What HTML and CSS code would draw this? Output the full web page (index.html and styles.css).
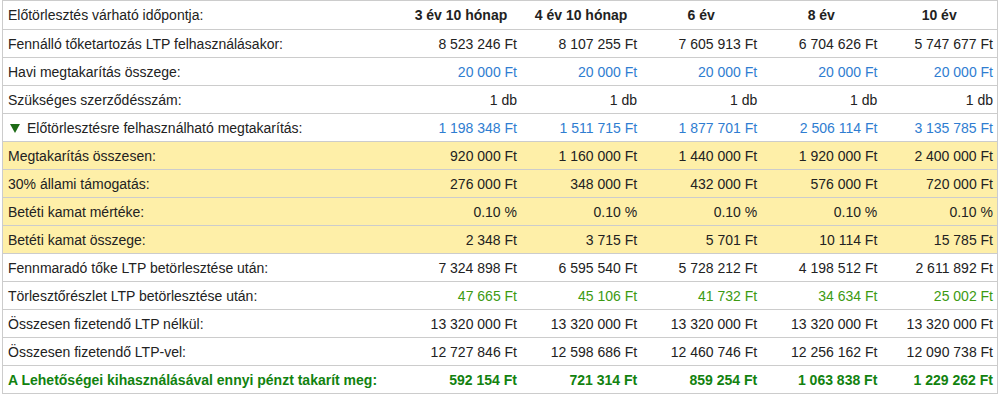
FILE: index.html
```html
<!DOCTYPE html>
<html lang="hu">
<head>
<meta charset="utf-8">
<title>LTP előtörlesztés</title>
<link rel="stylesheet" href="styles.css">
</head>
<body>
<table class="calc">
  <colgroup>
    <col class="c-label">
    <col class="c-val">
    <col class="c-val">
    <col class="c-val">
    <col class="c-val">
    <col class="c-last">
  </colgroup>
  <tr class="head">
    <td class="label">Előtörlesztés várható időpontja:</td>
    <th>3 év 10 hónap</th><th>4 év 10 hónap</th><th>6 év</th><th>8 év</th><th>10 év</th>
  </tr>
  <tr>
    <td class="label">Fennálló tőketartozás LTP felhasználásakor:</td>
    <td>8 523 246 Ft</td><td>8 107 255 Ft</td><td>7 605 913 Ft</td><td>6 704 626 Ft</td><td>5 747 677 Ft</td>
  </tr>
  <tr class="blue">
    <td class="label">Havi megtakarítás összege:</td>
    <td>20 000 Ft</td><td>20 000 Ft</td><td>20 000 Ft</td><td>20 000 Ft</td><td>20 000 Ft</td>
  </tr>
  <tr>
    <td class="label">Szükséges szerződésszám:</td>
    <td>1 db</td><td>1 db</td><td>1 db</td><td>1 db</td><td>1 db</td>
  </tr>
  <tr class="blue">
    <td class="label"><span class="tri"></span>Előtörlesztésre felhasználható megtakarítás:</td>
    <td>1 198 348 Ft</td><td>1 511 715 Ft</td><td>1 877 701 Ft</td><td>2 506 114 Ft</td><td>3 135 785 Ft</td>
  </tr>
  <tr class="yellow">
    <td class="label">Megtakarítás összesen:</td>
    <td>920 000 Ft</td><td>1 160 000 Ft</td><td>1 440 000 Ft</td><td>1 920 000 Ft</td><td>2 400 000 Ft</td>
  </tr>
  <tr class="yellow">
    <td class="label">30% állami támogatás:</td>
    <td>276 000 Ft</td><td>348 000 Ft</td><td>432 000 Ft</td><td>576 000 Ft</td><td>720 000 Ft</td>
  </tr>
  <tr class="yellow">
    <td class="label">Betéti kamat mértéke:</td>
    <td>0.10 %</td><td>0.10 %</td><td>0.10 %</td><td>0.10 %</td><td>0.10 %</td>
  </tr>
  <tr class="yellow">
    <td class="label">Betéti kamat összege:</td>
    <td>2 348 Ft</td><td>3 715 Ft</td><td>5 701 Ft</td><td>10 114 Ft</td><td>15 785 Ft</td>
  </tr>
  <tr>
    <td class="label">Fennmaradó tőke LTP betörlesztése után:</td>
    <td>7 324 898 Ft</td><td>6 595 540 Ft</td><td>5 728 212 Ft</td><td>4 198 512 Ft</td><td>2 611 892 Ft</td>
  </tr>
  <tr class="green">
    <td class="label">Törlesztőrészlet LTP betörlesztése után:</td>
    <td>47 665 Ft</td><td>45 106 Ft</td><td>41 732 Ft</td><td>34 634 Ft</td><td>25 002 Ft</td>
  </tr>
  <tr>
    <td class="label">Összesen fizetendő LTP nélkül:</td>
    <td>13 320 000 Ft</td><td>13 320 000 Ft</td><td>13 320 000 Ft</td><td>13 320 000 Ft</td><td>13 320 000 Ft</td>
  </tr>
  <tr>
    <td class="label">Összesen fizetendő LTP-vel:</td>
    <td>12 727 846 Ft</td><td>12 598 686 Ft</td><td>12 460 746 Ft</td><td>12 256 162 Ft</td><td>12 090 738 Ft</td>
  </tr>
  <tr class="total">
    <td class="label">A Lehetőségei kihasználásával ennyi pénzt takarít meg:</td>
    <td>592 154 Ft</td><td>721 314 Ft</td><td>859 254 Ft</td><td>1 063 838 Ft</td><td>1 229 262 Ft</td>
  </tr>
</table>
</body>
</html>
```

FILE: styles.css
```css
html, body {
  margin: 0;
  padding: 0;
  background: #fff;
}

.calc {
  margin-left: 2px;
  border-collapse: collapse;
  table-layout: fixed;
  width: 996px;
  border: 1px solid #cccccc;
  font-family: "Liberation Sans", Arial, sans-serif;
  font-size: 14px;
  color: #222;
}

.c-label { width: 398px; }
.c-val { width: 120px; }
.c-last { width: 116px; }

.calc td,
.calc th {
  height: 27px;
  padding: 0 4px 0 5px;
  border-bottom: 1px solid #cccccc;
  text-align: right;
  white-space: nowrap;
  vertical-align: middle;
  line-height: 16px;
}

.calc .head td,
.calc .head th {
  height: 28px;
}

.calc th {
  font-weight: bold;
  text-align: center;
  padding: 0;
}

.calc td.label {
  text-align: left;
  padding-left: 5px;
}

.tri {
  display: inline-block;
  width: 0;
  height: 0;
  border-left: 5px solid transparent;
  border-right: 5px solid transparent;
  border-top: 9px solid #1d6b16;
  margin: 0 7px 1px 2px;
  vertical-align: middle;
}

.blue td:not(.label) { color: #2f7dd1; }

.green td:not(.label) { color: #3c9a12; }

.yellow td { background: #feefa8; }

.total td {
  font-weight: bold;
  color: #12820f;
}
```
